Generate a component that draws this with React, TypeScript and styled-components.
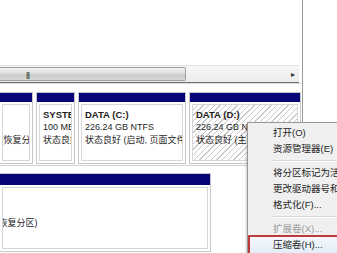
import React from "react";
import styled, { createGlobalStyle } from "styled-components";

const GlobalStyle = createGlobalStyle`
  html, body {
    margin: 0;
    padding: 0;
    background: #ffffff;
  }
  body {
    font-family: "Liberation Sans", "Noto Sans CJK SC", sans-serif;
    font-size: 9px;
    color: #1e1e1e;
  }
`;

type Part = {
  name: string;
  size: string;
  status: string;
  width: number;
  hatched?: boolean;
  shift?: number;
};

const topDisk: Part[] = [
  { name: "", size: "", status: "状态良好 (恢复分区", width: 33, shift: -44 },
  { name: "SYSTEM", size: "100 MB NTFS", status: "状态良好 (系统, 活动, 主分区)", width: 39 },
  { name: "DATA  (C:)", size: "226.24 GB NTFS", status: "状态良好 (启动, 页面文件, 故障转储, 主分区)", width: 108 },
  { name: "DATA  (D:)", size: "226.24 GB NTFS", status: "状态良好 (主分区)", width: 112, hatched: true },
];

const menuItems = [
  { label: "打开(O)" },
  { label: "资源管理器(E)" },
  { sep: true },
  { label: "将分区标记为活动分区(M)" },
  { label: "更改驱动器号和路径(C)..." },
  { label: "格式化(F)..." },
  { sep: true },
  { label: "扩展卷(X)...", disabled: true },
  { label: "压缩卷(H)...", active: true },
];

const App: React.FC = () => {
  return (
    <Screen>
      <GlobalStyle />
      <Window>
        <ListPane />
        <HScroll>
          <Thumb>
            <Grip>|||</Grip>
          </Thumb>
          <Track />
          <Arrow>▸</Arrow>
        </HScroll>
        <DiskPane>
          <DiskRow>
            {topDisk.map((p, i) => (
              <Partition key={i} $width={p.width}>
                <PartHeader />
                <PartBody $hatched={p.hatched}>
                  <Name $shift={p.shift}>{p.name || "\u00a0"}</Name>
                  <Line $shift={p.shift}>{p.size || "\u00a0"}</Line>
                  <Line $shift={p.shift}>{p.status}</Line>
                </PartBody>
              </Partition>
            ))}
          </DiskRow>
          <DiskRow $second>
            <Partition $width={211}>
              <PartHeader $tall />
              <PartBody $tall>
                <Name>{"\u00a0"}</Name>
                <Line>{"\u00a0"}</Line>
                <Line $shift={-49}>状态良好 (恢复分区)</Line>
              </PartBody>
            </Partition>
          </DiskRow>
        </DiskPane>
      </Window>
      <SideStrip />
      <Menu>
        {menuItems.map((m, i) =>
          m.sep ? (
            <Separator key={i} />
          ) : (
            <MenuItem key={i} $disabled={m.disabled} $active={m.active}>
              {m.label}
            </MenuItem>
          )
        )}
      </Menu>
    </Screen>
  );
};

export default App;

const Screen = styled.div`
  position: relative;
  width: 337px;
  height: 253px;
  display: flex;
  overflow: hidden;
  background: #ffffff;
`;

const Window = styled.div`
  width: 302px;
  flex-shrink: 0;
  display: flex;
  flex-direction: column;
  border-right: 1px solid #9a9a9a;
  background: #ffffff;
`;

const SideStrip = styled.div`
  flex: 1;
  background: #ffffff;
`;

const ListPane = styled.div`
  height: 65px;
  background: #ffffff;
`;

const HScroll = styled.div`
  width: 299px;
  height: 16px;
  display: flex;
  align-items: center;
  background: linear-gradient(#f6f6f6, #ececec);
  border-top: 1px solid #e2e2e2;
  border-bottom: 1px solid #6f6f6f;
`;

const Thumb = styled.div`
  width: 186px;
  height: 14px;
  display: flex;
  align-items: center;
  background: linear-gradient(#f0f0f0 0%, #e0e0e0 45%, #cbcbcb 55%, #d8d8d8 100%);
  border: 1px solid #a0a0a0;
  border-left: none;
  border-radius: 0 2px 2px 0;
  box-sizing: border-box;
`;

const Grip = styled.span`
  margin-left: 26px;
  font-size: 7px;
  font-weight: bold;
  letter-spacing: -1px;
  color: #555555;
`;

const Track = styled.div`
  flex: 1;
`;

const Arrow = styled.span`
  width: 12px;
  font-size: 8px;
  color: #333333;
  text-align: center;
`;

const DiskPane = styled.div`
  flex: 1;
  display: flex;
  flex-direction: column;
  gap: 7px;
  padding-top: 8px;
  background: #ffffff;
  border-top: 1px solid #dcdcdc;
`;

const DiskRow = styled.div<{ $second?: boolean }>`
  display: flex;
  gap: 3px;
  padding-bottom: ${(p) => (p.$second ? 0 : 1)}px;
  border-bottom: ${(p) => (p.$second ? "none" : "1px solid #d0d0d0")};
  width: 298px;
`;

const Partition = styled.div<{ $width: number }>`
  width: ${(p) => p.$width}px;
  flex-shrink: 0;
  display: flex;
  flex-direction: column;
  border: 1px solid #c6c6c6;
  border-left-width: 0;
  box-sizing: border-box;
  & + & {
    border-left-width: 1px;
  }
`;

const PartHeader = styled.div<{ $tall?: boolean }>`
  height: ${(p) => (p.$tall ? 11 : 9)}px;
  background: #06067a;
  border-bottom: 2px solid #ffffff;
`;

const PartBody = styled.div<{ $hatched?: boolean; $tall?: boolean }>`
  height: ${(p) => (p.$tall ? 62 : 57)}px;
  display: flex;
  flex-direction: column;
  align-items: flex-start;
  padding: 3px 3px 0 3px;
  box-sizing: border-box;
  overflow: hidden;
  white-space: nowrap;
  line-height: 13px;
  margin: 0 2px 2px 2px;
  border: 1px solid #d6d6d6;
  background: ${(p) =>
    p.$hatched
      ? "repeating-linear-gradient(135deg, #ffffff 0px, #ffffff 3px, #c9c9c9 3px, #c9c9c9 4px)"
      : "#ffffff"};
`;

const Line = styled.div<{ $shift?: number }>`
  margin-left: ${(p) => p.$shift ?? 0}px;
`;

const Name = styled(Line)`
  font-weight: bold;
  font-size: 9.5px;
`;

const Menu = styled.div`
  position: absolute;
  left: 247px;
  top: 122px;
  width: 100px;
  height: 140px;
  padding-top: 2px;
  background: #f0f0f0;
  border: 1px solid #979797;
  box-shadow: -1px 1px 2px rgba(0, 0, 0, 0.2);
  box-sizing: border-box;
  display: flex;
  flex-direction: column;
`;

const MenuItem = styled.div<{ $disabled?: boolean; $active?: boolean }>`
  position: relative;
  height: 16px;
  line-height: 16px;
  padding-left: 25px;
  white-space: nowrap;
  font-size: 9.5px;
  color: ${(p) => (p.$disabled ? "#9a9a9a" : "#1e1e1e")};
  background: ${(p) =>
    p.$active ? "linear-gradient(#f5f8fc, #e3ecf7)" : "transparent"};
  ${(p) =>
    p.$active &&
    `
    &::after {
      content: "";
      position: absolute;
      left: 0px;
      top: -2px;
      right: -4px;
      bottom: -4px;
      border: 2px solid #c0393a;
      border-radius: 1px;
    }
  `}
`;

const Separator = styled.div`
  height: 1px;
  margin: 3px 0 3px 25px;
  background: #d7d7d7;
  border-bottom: 1px solid #ffffff;
`;
